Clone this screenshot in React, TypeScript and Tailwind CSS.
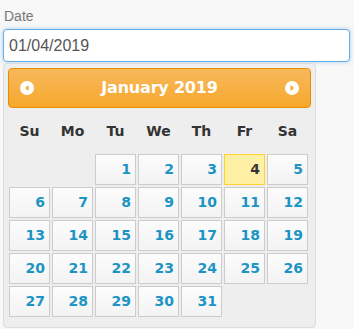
const dayNames = ['Su', 'Mo', 'Tu', 'We', 'Th', 'Fr', 'Sa'];

// January 2019 starts on a Tuesday
const cells: (number | null)[] = [null, null, ...Array.from({ length: 31 }, (_, i) => i + 1)];
while (cells.length % 7 !== 0) cells.push(null);

function NavIcon({ dir }: { dir: 'prev' | 'next' }) {
    return (
        <span className="flex h-[14px] w-[14px] items-center justify-center rounded-full bg-white">
            <svg width="8" height="8" viewBox="0 0 8 8">
                {dir === 'prev' ? (
                    <polygon points="5.5,1 5.5,7 2,4" fill="#f6a828" />
                ) : (
                    <polygon points="2.5,1 2.5,7 6,4" fill="#f6a828" />
                )}
            </svg>
        </span>
    );
}

export default function App() {
    const selected = 4;

    return (
        <div className="min-h-screen bg-[#f8f8f8] pl-[3px] pt-[6px]" style={{ width: 354, height: 329 }}>
            <label className="block pl-[1px] text-[14px] leading-[20px] text-[#777]" style={{ fontFamily: '"Liberation Sans", Arial, sans-serif' }}>
                Date
            </label>
            <div
                className="mt-[3px] flex h-[33px] w-[347px] items-center rounded-[4px] border border-[#66afe9] bg-white pl-[5px] text-[16px] text-[#555] shadow-[0_0_4px_rgba(102,175,233,0.6)]"
                style={{ fontFamily: '"Liberation Sans", Arial, sans-serif' }}
            >
                01/04/2019
            </div>

            <div
                className="mt-[1px] w-[313px] rounded-[4px] border border-[#dddddd] bg-[#eeeeee] p-[4px] pb-[10px]"
                style={{ fontFamily: '"DejaVu Sans", Verdana, sans-serif' }}
            >
                <div className="flex h-[40px] items-center justify-between rounded-[4px] border border-[#e78f08] bg-gradient-to-b from-[#f8b85a] to-[#f6a828] px-[11px]">
                    <NavIcon dir="prev" />
                    <span className="text-[16px] font-bold tracking-[-0.2px] text-white">January 2019</span>
                    <NavIcon dir="next" />
                </div>

                <div className="mt-[6px] grid grid-cols-7 gap-[2px] pl-[1px] pr-[3px]">
                    {dayNames.map((d) => (
                        <div key={d} className="flex h-[34px] items-center justify-center text-[14px] font-bold text-[#333]">
                            {d}
                        </div>
                    ))}
                </div>

                <div className="mt-[6px] grid grid-cols-7 gap-[2px] pl-[1px] pr-[3px]">
                    {cells.map((n, i) =>
                        n === null ? (
                            <div key={i} className="h-[31px]" />
                        ) : n === selected ? (
                            <div
                                key={i}
                                className="flex h-[31px] items-center justify-end border border-[#fed22f] bg-[#fff0a5] pr-[4px] text-[14px] font-bold text-[#363636]"
                            >
                                {n}
                            </div>
                        ) : (
                            <div
                                key={i}
                                className="flex h-[31px] items-center justify-end border border-[#cccccc] bg-gradient-to-b from-[#fcfcfc] to-[#f3f3f3] pr-[4px] text-[14px] font-bold text-[#1c94c4]"
                            >
                                {n}
                            </div>
                        )
                    )}
                </div>
            </div>
        </div>
    );
}
